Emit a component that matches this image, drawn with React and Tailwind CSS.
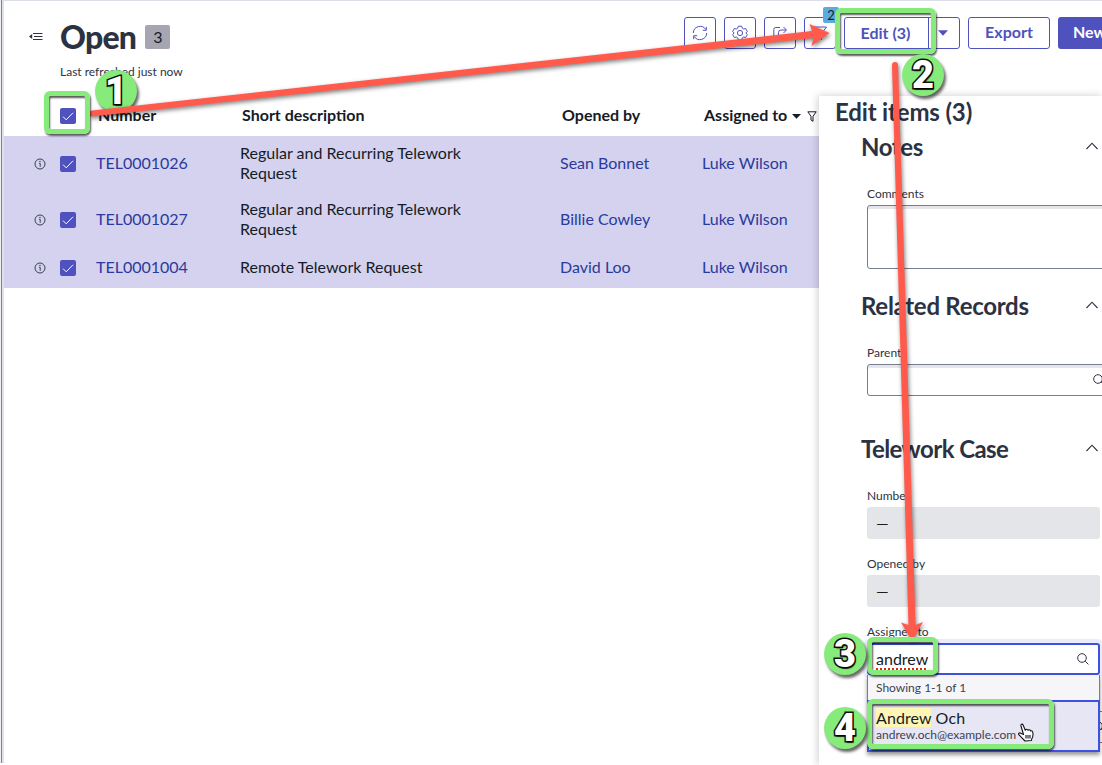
import React from "react";

function Check() {
  return (
    <span className="flex h-4 w-4 shrink-0 items-center justify-center rounded-[2px] bg-[#4f52bd]">
      <svg width="16" height="16" viewBox="0 0 16 16" fill="none" stroke="#fff" strokeWidth="1">
        <path d="M3 8.6 6.2 11.8 13 4.8" />
      </svg>
    </span>
  );
}

function Info() {
  return (
    <svg className="shrink-0" width="12" height="12" viewBox="0 0 12 12" fill="none" stroke="#3c4252">
      <circle cx="6" cy="6" r="5" strokeWidth="1" />
      <path d="M5 5.3H6.2V8.8" strokeWidth="1" />
      <circle cx="6" cy="3.5" r="0.7" fill="#3c4252" stroke="none" />
    </svg>
  );
}

function Search({ className }) {
  return (
    <svg className={className} width="12" height="12" viewBox="0 0 12 12" fill="none" stroke="#2d3142" strokeWidth="1">
      <circle cx="5" cy="5" r="4.3" />
      <path d="M8.2 8.2 11.4 11.4" />
    </svg>
  );
}

function ToolButton({ children }) {
  return (
    <button className="flex h-8 w-8 shrink-0 items-center justify-center rounded-[3px] border border-[#4f52bd] text-[#4f52bd]">
      <svg width="16" height="16" viewBox="0 0 16 16" fill="none" stroke="currentColor" strokeWidth="1">
        {children}
      </svg>
    </button>
  );
}

const rows = [
  { id: "TEL0001026", text: "Regular and Recurring Telework Request", by: "Sean Bonnet", tall: true },
  { id: "TEL0001027", text: "Regular and Recurring Telework Request", by: "Billie Cowley", tall: true },
  { id: "TEL0001004", text: "Remote Telework Request", by: "David Loo", tall: false },
];

function Row({ row }) {
  return (
    <div className={"flex items-center bg-[#d4d2ee] text-[16px] leading-5 " + (row.tall ? "h-14" : "h-10")}>
      <div className="flex w-[92px] items-center gap-[14px] pl-[30px]">
        <Info />
        <Check />
      </div>
      <div className="w-36 pb-[2px] text-[#2a3a9c]">{row.id}</div>
      <div className="w-80 pr-20 pb-[2px] text-[#161b26]">{row.text}</div>
      <div className="w-[142px] pb-[2px] text-[#2a3a9c]">{row.by}</div>
      <div className="pb-[2px] whitespace-nowrap text-[#2a3a9c]">Luke Wilson</div>
    </div>
  );
}

function Section({ title, className }) {
  return (
    <div className={"flex items-center justify-between pl-[42px] pr-1 " + className}>
      <h2 className="text-[24px] leading-8 font-bold text-[#2d3243]">{title}</h2>
      <svg className="mb-[2px]" width="12" height="8" viewBox="0 0 12 8" fill="none" stroke="#2d3243" strokeWidth="1.1">
        <path d="M0.5 7 6 1.2 11.5 7" />
      </svg>
    </div>
  );
}

function Label({ children }) {
  return <div className="h-[17px] text-[12px] leading-[15px] text-[#2d3243]">{children}</div>;
}

function Badge({ n, className }) {
  return (
    <div className={"absolute flex h-[42px] w-[42px] items-center justify-center rounded-full bg-[#87eb7c] shadow-[2px_3px_3px_rgba(0,0,0,0.6)] " + className}>
      <span className="font-[Roboto,sans-serif] text-[38px] leading-none font-black text-white [-webkit-text-stroke:3px_#111] [paint-order:stroke_fill] [text-shadow:1px_2px_1px_rgba(0,0,0,0.7)]">{n}</span>
    </div>
  );
}

function Frame({ className }) {
  return <div className={"absolute rounded-[6px] border-[5px] border-[#87eb7c] shadow-[1px_2px_2px_rgba(0,0,0,0.65),inset_1px_2px_2px_rgba(0,0,0,0.65)] " + className} />;
}

function Toolbar() {
  return (
    <div className="flex items-start gap-2 pt-[16px]">
      <ToolButton>
        <path d="M1.3 8A6.8 6.8 0 0 1 13.8 4.5M14.3 1.8V5.3H10.8M14.7 8A6.8 6.8 0 0 1 2.2 11.5M1.7 14.2V10.7H5.2" />
      </ToolButton>
      <ToolButton>
        <path d="M6.3 1.2H9.7L10.3 3.2 11.7 4 13.7 3.5 15.3 6.4 13.9 8 15.3 9.6 13.7 12.5 11.7 12 10.3 12.8 9.7 14.8H6.3L5.7 12.8 4.3 12 2.3 12.5.7 9.6 2.1 8 .7 6.4 2.3 3.5 4.3 4 5.7 3.2Z" strokeLinejoin="round" />
        <circle cx="8" cy="8" r="2.6" />
      </ToolButton>
      <ToolButton>
        <path d="M8 2.5H3.8A2 2 0 0 0 1.8 4.5V12.5A2 2 0 0 0 3.8 14.5H11.5A2 2 0 0 0 13.5 12.5V9.5M6.5 10V7.5A2.5 2.5 0 0 1 9 5H14M11.5 2 14.5 5 11.5 8" />
      </ToolButton>
      <div className="relative">
        <ToolButton>
          <path d="M1.5 2H14.5L9.5 8.5V14.5L6.5 12V8.5Z" />
        </ToolButton>
        <span className="absolute -top-[10px] left-[19px] h-4 w-4 rounded-[2px] bg-[#5baae0] text-center text-[13px] leading-4 text-[#161b26]">2</span>
      </div>
      <div className="flex h-8 w-[116px] rounded-[3px] border border-[#4f52bd] text-[#4f52bd]">
        <button className="w-[84px] border-r border-[#4f52bd] pr-[2px] text-[16px] leading-[28px] font-bold">Edit (3)</button>
        <button className="flex grow items-center justify-center pr-[2px]">
          <svg width="10" height="6" viewBox="0 0 10 6" fill="currentColor"><path d="M0 .3H10L5 5.8Z" /></svg>
        </button>
      </div>
      <button className="h-8 w-[82px] rounded-[3px] border border-[#4f52bd] pb-[2px] text-[16px] leading-[28px] font-bold text-[#4f52bd]">Export</button>
      <button className="h-8 w-[70px] rounded-[3px] bg-[#4f52bd] pb-[2px] pl-[15px] text-left text-[16px] leading-[30px] font-bold text-white">New</button>
    </div>
  );
}

function EditPanel() {
  return (
    <aside className="z-10 flex w-[283px] shrink-0 flex-col bg-white shadow-[-1px_0_8px_rgba(0,0,0,0.2)]">
      <h1 className="pl-4 text-[24px] leading-8 font-bold tracking-[-0.15px] text-[#2d3243]">Edit items (3)</h1>
      <Section title="Notes" className="mt-[3px] tracking-[-0.4px]" />
      <div className="mt-[23px] flex flex-col pl-12">
        <Label>Comments</Label>
        <div className="mt-[2px] h-16 w-[260px] rounded-[3px] border border-[#777d90] shadow-[inset_0_3px_0_#e6e6ea]" />
      </div>
      <Section title="Related Records" className="mt-[21px] tracking-[-0.28px]" />
      <div className="mt-[23px] flex flex-col pl-12">
        <Label>Parent</Label>
        <div className="mt-[2px] flex h-8 w-[260px] items-center rounded-[3px] border border-[#777d90] pl-[225px] shadow-[inset_0_3px_0_#e6e6ea]">
          <Search />
        </div>
      </div>
      <Section title="Telework Case" className="mt-[37px] tracking-[-0.58px]" />
      <div className="mt-[23px] flex flex-col pl-12">
        <Label>Number</Label>
        <div className="mt-[2px] mr-[2px] h-8 rounded-[3px] bg-[#e4e5e9] pl-[9px] text-[16px] leading-8 text-[#161b26]">—</div>
        <div className="mt-[17px]"><Label>Opened by</Label></div>
        <div className="mt-[2px] mr-[2px] h-8 rounded-[3px] bg-[#e4e5e9] pl-[9px] text-[16px] leading-8 text-[#161b26]">—</div>
        <div className="mt-[17px]"><Label>Assigned to</Label></div>
        <div className="relative mt-[2px] mr-[2px] flex h-8 items-center justify-between rounded-[3px] border-2 border-[#3d52e0] pr-[9px] pl-[7px] shadow-[0_0_0_4px_#ebecfb]">
          <span className="text-[16px] leading-5 text-[#161b26] underline decoration-[#e32222] decoration-dotted decoration-2 underline-offset-[3px] [text-decoration-skip-ink:none]">andrew</span>
          <Search />
          <div className="absolute top-[30px] -left-[2px] z-10 h-[77px] w-[233px] border border-t-0 border-[#777d90] bg-[#f6f6f9] shadow-[0_3px_4px_rgba(0,0,0,0.4)]">
            <div className="h-[25px] pl-2 text-[12px] leading-[26px] text-[#3c4252]">Showing 1-1 of 1</div>
            <div className="-mx-px flex h-[52px] flex-col border-2 border-[#3d52e0] bg-[#e7e6f5] pt-[6px] pl-[7px]">
              <div className="text-[16px] leading-[19px] tracking-[0.1px] text-[#161b26]"><span className="bg-[#fff5b5]">Andrew</span> Och</div>
              <div className="text-[12px] leading-4 text-[#3c4252]">andrew.och@example.com</div>
            </div>
          </div>
        </div>
        <div className="mt-[36px] flex h-8 w-[260px] items-center rounded-[3px] border border-[#777d90] pl-[225px]">
          <Search />
        </div>
      </div>
    </aside>
  );
}

function Annotations() {
  return (
    <div className="pointer-events-none absolute inset-0 z-20">
      <Badge n="1" className="top-[70px] left-[95px]" />
      <svg className="absolute inset-0 drop-shadow-[1px_2px_2px_rgba(0,0,0,0.5)]" width="1102" height="765" viewBox="0 0 1102 765" fill="#ff5a4b">
        <path d="M92 110.5 812 31 809.5 24 829.5 33 811.5 46 813.5 38 92 116.5Q89 116.5 89 113.5 89 111 92 110.5Z" />
        <path d="M892 65Q892 62 895 62 898 62 898 65L915.5 625 923 622 912 641 901 622.5 908.5 625Z" />
      </svg>
      <Frame className="top-[91px] left-[44px] h-[43px] w-[46px]" />
      <Frame className="top-[8px] left-[835px] h-[46px] w-[101px]" />
      <Badge n="2" className="top-[54px] left-[902px]" />
      <Frame className="top-[637px] left-[867px] h-[38px] w-[71px]" />
      <Frame className="top-[699px] left-[867px] h-[50px] w-[187px]" />
      <Badge n="3" className="top-[633px] left-[824px]" />
      <Badge n="4" className="top-[707px] left-[824px]" />
      <svg className="absolute top-[723px] left-[1018px]" width="16" height="19" viewBox="0 0 16 19" fill="#fff" stroke="#111" strokeWidth="1.1" strokeLinejoin="round">
        <path d="M5.5 11.5 3 3C2.5 1 4.5.5 5.2 2.2L7.3 7.3C8 5.8 9.5 6 10 7.3 11 6.2 12.2 6.8 12.5 8 14 7.3 14.7 8.5 14.9 10 15.3 13 14.8 14.5 13.7 16L13.5 17.5 7 18C5 16 3 14 .8 11.7 0 10.5 1.5 9.3 2.8 10.2Z" />
        <path d="M8 12V15.5M10 12V15.5M12 12V15.5" />
      </svg>
    </div>
  );
}

export default function App() {
  return (
    <div className="relative flex h-[765px] w-[1102px] overflow-hidden bg-white font-[Lato,sans-serif] text-[#161b26]">
      <div className="h-[763px] w-1 shrink-0 border-r-2 border-l border-r-[#dfe2e7] border-l-[#eef0f3] bg-[#7b8294]" />
      <div className="flex min-w-0 grow flex-col border-t border-[#dcdde5]">
        <header className="flex h-[95px] shrink-0">
          <div className="flex w-[680px] shrink-0 pl-[25px]">
            <svg className="mt-[30px]" width="14" height="12" viewBox="0 0 14 12" fill="none" stroke="#2d3243" strokeWidth="1">
              <path d="M4 2.5H13.5M5 5.5H13.5M4 8.5H13.5" />
              <path d="M0 5.5 3.2 3V8Z" fill="#2d3243" stroke="none" />
            </svg>
            <div className="ml-[17px]">
              <div className="flex h-[60px] items-start pt-4">
                <h1 className="text-[32px] leading-10 font-black tracking-[-0.75px] text-[#2d3243]">Open</h1>
                <span className="mt-2 ml-[9px] h-6 w-[25px] rounded-[2px] bg-[#a5a6b1] text-center text-[16px] leading-6">3</span>
              </div>
              <div className="pt-[3px] text-[12px] leading-4 text-[#2d3243]">Last refreshed just now</div>
            </div>
          </div>
          <Toolbar />
        </header>
        <div className="flex min-h-0 grow">
          <main className="w-[815px] shrink-0">
            <div className="flex h-10 items-center text-[16px] leading-5 font-bold">
              <div className="w-[94px] pl-14"><Check /></div>
              <div className="w-36 pb-[2px]">Number</div>
              <div className="w-80 pb-[2px]">Short description</div>
              <div className="w-[142px] pb-[2px]">Opened by</div>
              <div className="flex items-center pb-[2px] whitespace-nowrap">
                Assigned to
                <svg className="mt-[2px] ml-[5px]" width="9" height="5" viewBox="0 0 9 5" fill="#161b26"><path d="M0 0H9L4.5 4.8Z" /></svg>
                <svg className="mt-[2px] ml-[6px]" width="10" height="11" viewBox="0 0 10 11" fill="none" stroke="#161b26"><path d="M.8.8H9.2L6 5.3V10.3L4 9V5.3Z" /></svg>
              </div>
            </div>
            {rows.map((r) => <Row key={r.id} row={r} />)}
          </main>
          <EditPanel />
        </div>
      </div>
      <Annotations />
    </div>
  );
}
